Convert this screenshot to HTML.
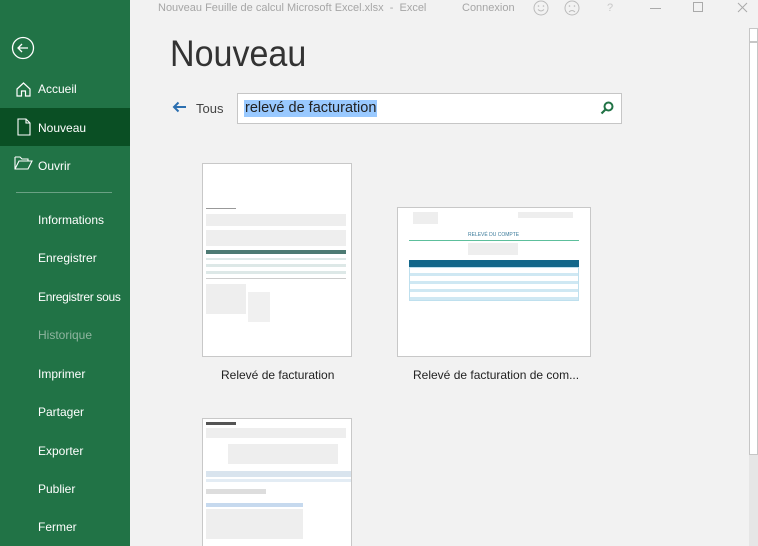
<!DOCTYPE html>
<html><head><meta charset="utf-8"><style>
*{margin:0;padding:0;box-sizing:border-box}
html{width:758px;height:546px;overflow:hidden}
body{width:758px;height:546px;overflow:hidden;background:#f2f2f2;font-family:"Liberation Sans",sans-serif;position:relative}
.side{position:absolute;left:0;top:0;width:130px;height:546px;background:#217346;color:#fff}
.it{position:absolute;left:38px;font-size:12px;color:#fff}
.sel{position:absolute;left:0;top:108px;width:130px;height:38px;background:#0a4f24}
.abs{position:absolute}
.tb{position:absolute;top:2px;font-size:11px;color:#a6a6a6}
.card{position:absolute;background:#fff;border:1px solid #c8c8c8}
.ln{position:absolute;height:1px;background:#ccc}
.lbl{position:absolute;font-size:12px;color:#222}
</style></head><body>
<div class="side">
<svg class="abs" style="left:11px;top:36px" width="24" height="24" viewBox="0 0 24 24"><circle cx="12" cy="12" r="10.5" fill="none" stroke="#fff" stroke-width="1.3"/><path d="M17 12H7M11 8l-4 4 4 4" fill="none" stroke="#fff" stroke-width="1.3"/></svg>
<svg class="abs" style="left:15px;top:81px" width="17" height="17" viewBox="0 0 17 17"><path d="M2 8L8.5 2 15 8V15H10.5V10H6.5V15H2Z" fill="none" stroke="#fff" stroke-width="1.2"/></svg>
<div class="it" style="top:82px">Accueil</div>
<div class="sel"></div>
<svg class="abs" style="left:17px;top:118px" width="14" height="18" viewBox="0 0 14 18"><path d="M1 1H9L13 5V17H1Z M9 1V5H13" fill="none" stroke="#fff" stroke-width="1.1"/></svg>
<div class="it" style="top:121px">Nouveau</div>
<svg class="abs" style="left:14px;top:156px" width="19" height="14" viewBox="0 0 19 14"><path d="M1 1H6L8 3H14V5 M1 1V13H14L18 5H5L1 13" fill="none" stroke="#fff" stroke-width="1.1"/></svg>
<div class="it" style="top:159px">Ouvrir</div>
<div class="abs" style="left:16px;top:192px;width:96px;height:1px;background:#6aa184"></div>
<div class="it" style="top:213px">Informations</div>
<div class="it" style="top:251px">Enregistrer</div>
<div class="it" style="top:290px;letter-spacing:-.3px">Enregistrer sous</div>
<div class="it" style="top:328px;color:#8fb59f">Historique</div>
<div class="it" style="top:367px">Imprimer</div>
<div class="it" style="top:405px">Partager</div>
<div class="it" style="top:444px">Exporter</div>
<div class="it" style="top:482px">Publier</div>
<div class="it" style="top:520px">Fermer</div>
</div>
<div class="tb" style="left:158px">Nouveau Feuille de calcul Microsoft Excel.xlsx &nbsp;- &nbsp;Excel</div>
<div class="tb" style="left:462px">Connexion</div>
<svg class="abs" style="left:533px;top:0" width="50" height="17"><circle cx="8" cy="8" r="7" fill="none" stroke="#bbb"/><path d="M5 9.5q3 3 6 0" fill="none" stroke="#bbb"/><circle cx="5.5" cy="6" r=".8" fill="#bbb"/><circle cx="10.5" cy="6" r=".8" fill="#bbb"/><circle cx="39" cy="8" r="7" fill="none" stroke="#bbb"/><path d="M36 12q3-3 6 0" fill="none" stroke="#bbb"/><circle cx="36.5" cy="6" r=".8" fill="#bbb"/><circle cx="41.5" cy="6" r=".8" fill="#bbb"/></svg>
<div class="tb" style="left:607px;color:#c8c8c8">?</div>
<svg class="abs" style="left:650px;top:0" width="105" height="17"><path d="M0 8.5H11" stroke="#aaa"/><rect x="43.5" y="2.5" width="9" height="9" fill="none" stroke="#aaa"/><path d="M88 3l9 9M97 3l-9 9" stroke="#aaa"/></svg>
<div class="abs" style="left:170px;top:33px;font-size:37px;color:#333;font-weight:300;transform:scaleX(.92);transform-origin:left">Nouveau</div>
<svg class="abs" style="left:172px;top:101px" width="15" height="12"><path d="M14 6H2M6.5 1.5L2 6l4.5 4.5" fill="none" stroke="#2b6fb0" stroke-width="2"/></svg>
<div class="abs" style="left:196px;top:101px;font-size:13px;color:#444">Tous</div>
<div class="abs" style="left:237px;top:93px;width:385px;height:31px;background:#fff;border:1px solid #c6c6c6"></div>
<div class="abs" style="left:244px;top:100px;font-size:14.5px;color:#222;background:#99c9ff;padding:0 1px;line-height:17px">relevé de facturation</div>
<svg class="abs" style="left:600px;top:101px" width="14" height="14"><circle cx="8.5" cy="5.5" r="4" fill="none" stroke="#217346" stroke-width="2"/><path d="M5.5 8.5L1.5 12.5" stroke="#217346" stroke-width="2.2"/></svg>
<div class="abs" style="left:749px;top:28px;width:9px;height:14px;background:#fff;border:1px solid #c6c6c6"></div>
<div class="abs" style="left:749px;top:42px;width:9px;height:413px;background:#fff;border:1px solid #c6c6c6"></div>
<div class="abs" style="left:749px;top:455px;width:9px;height:91px;background:#e6e6e6"></div>

<div class="card" style="left:202px;top:163px;width:150px;height:194px">
<div class="ln" style="left:3px;top:44px;width:30px;background:#999"></div>
<div class="ln" style="left:3px;top:50px;width:140px;background:#eee;height:12px"></div>
<div class="ln" style="left:3px;top:66px;width:140px;background:#eee;height:16px"></div>
<div class="abs" style="left:3px;top:86px;width:140px;height:4px;background:#4d7a73"></div>
<div class="abs" style="left:3px;top:94px;width:140px;height:2px;background:#dde8e7"></div>
<div class="abs" style="left:3px;top:100px;width:140px;height:3px;background:#dde8e7"></div>
<div class="abs" style="left:3px;top:107px;width:140px;height:3px;background:#dde8e7"></div>
<div class="ln" style="left:3px;top:114px;width:140px"></div>
<div class="ln" style="left:3px;top:120px;width:40px;background:#eee;height:30px"></div>
<div class="ln" style="left:45px;top:128px;width:22px;background:#f0f0f0;height:30px"></div>
</div>
<div class="lbl" style="left:221px;top:368px">Relevé de facturation</div>

<div class="card" style="left:397px;top:207px;width:194px;height:150px">
<div class="ln" style="left:15px;top:4px;width:25px;height:12px;background:#eee"></div>
<div class="ln" style="left:120px;top:4px;width:55px;height:6px;background:#eee"></div>
<div class="abs" style="left:70px;top:24px;font-size:5px;color:#3a7a9a">RELEVÉ DU COMPTE</div>
<div class="abs" style="left:11px;top:32px;width:170px;height:1px;background:#5dbf9c"></div>
<div class="ln" style="left:70px;top:35px;width:50px;height:12px;background:#eee"></div>
<div class="abs" style="left:11px;top:52px;width:170px;height:7px;background:#13678a"></div>
<div class="abs" style="left:11px;top:59px;width:170px;height:34px;border:1px solid #bfe0ee;background:repeating-linear-gradient(#fff 0 5px,#cfe8f3 5px 8px)"></div>
</div>
<div class="lbl" style="left:413px;top:368px">Relevé de facturation de com...</div>

<div class="card" style="left:202px;top:418px;width:150px;height:130px;border-bottom:none">
<div class="abs" style="left:3px;top:3px;width:30px;height:3px;background:#555"></div>
<div class="ln" style="left:3px;top:9px;width:140px;height:10px;background:#eee"></div>
<div class="ln" style="left:25px;top:25px;width:110px;height:20px;background:#eee"></div>
<div class="abs" style="left:3px;top:52px;width:145px;height:6px;background:#d9e4ee"></div>
<div class="abs" style="left:3px;top:60px;width:145px;height:3px;background:#e3ecf4"></div>
<div class="ln" style="left:3px;top:70px;width:60px;height:5px;background:#ddd"></div>
<div class="abs" style="left:3px;top:84px;width:97px;height:4px;background:#c6d9ee"></div>
<div class="ln" style="left:3px;top:90px;width:97px;height:30px;background:#eee"></div>
</div>
</body></html>
